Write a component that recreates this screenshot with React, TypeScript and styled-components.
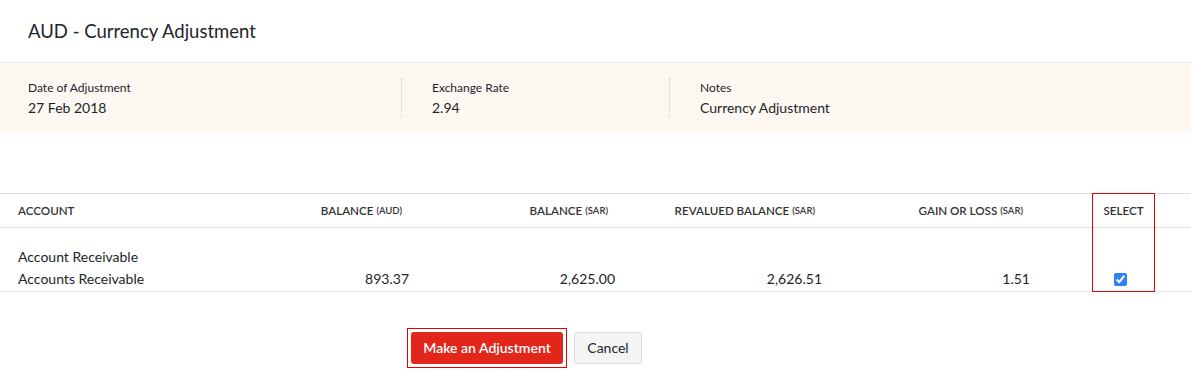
import styled, { createGlobalStyle } from 'styled-components';

const GlobalStyle = createGlobalStyle`
  body {
    margin: 0;
    background: #fff;
    color: #212529;
    font-family: Lato, 'Open Sans', sans-serif;
  }
`;

const infoItems = [
  { label: 'Date of Adjustment', value: '27 Feb 2018' },
  { label: 'Exchange Rate', value: '2.94' },
  { label: 'Notes', value: 'Currency Adjustment' },
];

const columns = [
  { title: 'BALANCE', unit: '(AUD)', value: '893.37' },
  { title: 'BALANCE', unit: '(SAR)', value: '2,625.00' },
  { title: 'REVALUED BALANCE', unit: '(SAR)', value: '2,626.51' },
  { title: 'GAIN OR LOSS', unit: '(SAR)', value: '1.51' },
];

const App = () => {
  return (
    <>
      <GlobalStyle />
      <Header>
        <Title>AUD - Currency Adjustment</Title>
      </Header>
      <InfoPanel>
        {infoItems.map((item, i) => (
          <InfoItem key={item.label} first={i === 0}>
            <InfoLabel>{item.label}</InfoLabel>
            <InfoValue>{item.value}</InfoValue>
          </InfoItem>
        ))}
      </InfoPanel>
      <Table>
        <HeadRule />
        <HeadCell col={1} align="start">ACCOUNT</HeadCell>
        {columns.map((c, i) => (
          <HeadCell key={i} col={i + 2} align="end">
            {c.title} <Unit>{c.unit}</Unit>
          </HeadCell>
        ))}
        <HeadCell col={7} align="center">SELECT</HeadCell>

        <BodyCell col={1} align="start">
          <GroupName>Account Receivable</GroupName>
          <div>Accounts Receivable</div>
        </BodyCell>
        {columns.map((c, i) => (
          <BodyCell key={i} col={i + 2} align="end">
            {c.value}
          </BodyCell>
        ))}
        <BodyCell col={7} align="center">
          <Checkbox type="checkbox" defaultChecked />
        </BodyCell>

        <Highlight />
      </Table>
      <Actions>
        <FocusRing>
          <PrimaryButton>Make an Adjustment</PrimaryButton>
        </FocusRing>
        <SecondaryButton>Cancel</SecondaryButton>
      </Actions>
    </>
  );
};

export default App;

// region STYLES

const Header = styled.div`
  height: 62px;
  padding: 0 28px;
  display: flex;
  align-items: center;
  border-bottom: 1px solid #ececec;
`;

const Title = styled.h1`
  margin: 0;
  font-size: 18.5px;
  font-weight: 400;
  color: #212529;
`;

const InfoPanel = styled.div`
  display: flex;
  background: #fdf8f2;
  padding: 15px 0;
`;

const InfoItem = styled.div<{ first?: boolean }>`
  box-sizing: border-box;
  width: ${(p) => (p.first ? '401px' : '268px')};
  padding-left: ${(p) => (p.first ? '28px' : '30px')};
  border-left: ${(p) => (p.first ? 'none' : '1px dotted #cfcfcf')};
  height: 40px;
`;

const InfoLabel = styled.div`
  font-size: 12px;
  line-height: 20px;
  color: #212529;
`;

const InfoValue = styled.div`
  font-size: 14px;
  line-height: 19px;
  color: #212529;
`;

const Table = styled.div`
  margin-top: 60px;
  display: grid;
  grid-template-columns: 203px 206px 206px 207px 208px 62px 63px 1fr;
  border-top: 1px solid #dedede;
  border-bottom: 1px solid #e6e6e6;
  color: #212529;
`;

const HeadRule = styled.div`
  grid-row: 1;
  grid-column: 1 / -1;
  border-bottom: 1px solid #dedede;
  pointer-events: none;
`;

type CellProps = { col: number; align: 'start' | 'end' | 'center' };

const HeadCell = styled.div<CellProps>`
  grid-row: 1;
  grid-column: ${(p) => p.col};
  box-sizing: border-box;
  height: 34px;
  padding-bottom: 1px;
  display: flex;
  align-items: center;
  justify-content: ${(p) => (p.align === 'center' ? 'center' : `flex-${p.align}`)};
  padding-left: ${(p) => (p.align === 'start' ? '18px' : '0')};
  padding-right: ${(p) => (p.align === 'end' ? '7px' : '0')};
  font-size: 11.6px;
  font-weight: 600;
  color: #333;
  white-space: nowrap;
`;

const Unit = styled.span`
  font-size: 9.5px;
  margin-left: 3px;
`;

const BodyCell = styled.div<CellProps>`
  grid-row: 2;
  grid-column: ${(p) => p.col};
  padding: 18px 0 1px ${(p) => (p.align === 'start' ? '18px' : '0')};
  display: flex;
  flex-direction: column;
  justify-content: flex-end;
  align-items: ${(p) => (p.align === 'center' ? 'center' : `flex-${p.align}`)};
  line-height: 22px;
  font-size: 14px;
`;

const GroupName = styled.div`
  line-height: 22px;
`;

const Checkbox = styled.input`
  width: 13px;
  height: 13px;
  margin: 0 7px 4px 0;
  accent-color: #2d80f6;
`;

const Highlight = styled.div`
  grid-column: 7;
  grid-row: 1 / span 2;
  margin-top: -1px;
  margin-bottom: -1px;
  border: 1px solid #e60000;
  pointer-events: none;
`;

const Actions = styled.div`
  display: flex;
  align-items: center;
  gap: 7px;
  padding: 36px 0 0 407px;
`;

const FocusRing = styled.div`
  padding: 3px;
  border: 1px solid #e60000;
  display: flex;
`;

const PrimaryButton = styled.button`
  height: 32px;
  width: 152px;
  border: none;
  border-radius: 3px;
  background: #e3261b;
  color: #fff;
  font-family: inherit;
  font-size: 14px;
  font-weight: 600;
  padding-bottom: 2px;
`;

const SecondaryButton = styled.button`
  height: 32px;
  width: 68px;
  border: 1px solid #dcdcdc;
  border-radius: 3px;
  background: #f4f4f4;
  color: #212529;
  font-family: inherit;
  font-size: 14px;
  padding-bottom: 2px;
`;

// endregion
